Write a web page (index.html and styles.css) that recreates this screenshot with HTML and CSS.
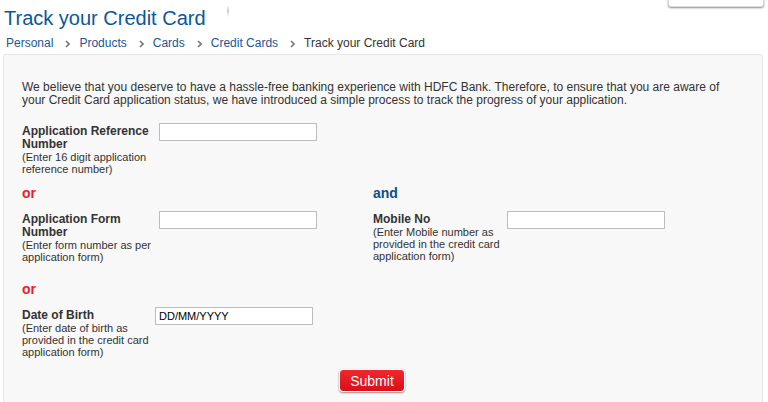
FILE: index.html
```html
<!DOCTYPE html>
<html lang="en">
<head>
<meta charset="UTF-8">
<title>Track your Credit Card</title>
<link rel="stylesheet" href="styles.css">
</head>
<body>
<div class="tools"></div>

<div class="header">
    <h1 class="title">Track your Credit Card</h1>
    <span class="divider"></span>
</div>

<div class="crumbs">
    <a class="crumb">Personal</a>
    <span class="sep"><svg width="5" height="8" viewBox="0 0 5 8"><path d="M1 1l3 3-3 3" fill="none" stroke="#777" stroke-width="1.6"/></svg></span>
    <a class="crumb">Products</a>
    <span class="sep"><svg width="5" height="8" viewBox="0 0 5 8"><path d="M1 1l3 3-3 3" fill="none" stroke="#777" stroke-width="1.6"/></svg></span>
    <a class="crumb">Cards</a>
    <span class="sep"><svg width="5" height="8" viewBox="0 0 5 8"><path d="M1 1l3 3-3 3" fill="none" stroke="#777" stroke-width="1.6"/></svg></span>
    <a class="crumb">Credit Cards</a>
    <span class="sep"><svg width="5" height="8" viewBox="0 0 5 8"><path d="M1 1l3 3-3 3" fill="none" stroke="#777" stroke-width="1.6"/></svg></span>
    <span class="current">Track your Credit Card</span>
</div>

<div class="panel">
    <p class="intro">We believe that you deserve to have a hassle-free banking experience with HDFC Bank. Therefore, to ensure that you are aware of your Credit Card application status, we have introduced a simple process to track the progress of your application.</p>

    <div class="field">
        <label class="label">
            <b>Application Reference Number</b>
            <span class="hint">(Enter 16 digit application reference number)</span>
        </label>
        <input class="text" type="text">
    </div>

    <div class="pair">
        <div class="col">
            <div class="or">or</div>
            <div class="field">
                <label class="label">
                    <b>Application Form Number</b>
                    <span class="hint">(Enter form number as per application form)</span>
                </label>
                <input class="text" type="text">
            </div>
        </div>
        <div class="col">
            <div class="and">and</div>
            <div class="field mobile">
                <label class="label">
                    <b>Mobile No</b>
                    <span class="hint">(Enter Mobile number as provided in the credit card application form)</span>
                </label>
                <input class="text" type="text">
            </div>
        </div>
    </div>

    <div class="or or2">or</div>
    <div class="field dob">
        <label class="label">
            <b>Date of Birth</b>
            <span class="hint">(Enter date of birth as provided in the credit card application form)</span>
        </label>
        <input class="text" type="text" value="DD/MM/YYYY">
    </div>

    <div class="actions">
        <button class="submit" type="button">Submit</button>
    </div>
</div>
</body>
</html>
```

FILE: styles.css
```css
body {
    margin: 0;
    font-family: "Liberation Sans", Arial, sans-serif;
    color: #333;
    background: #fff;
}

.tools {
    position: absolute;
    top: -20px;
    left: 668px;
    width: 94px;
    height: 25px;
    background: #fff;
    border: 1px solid #ddd;
    border-radius: 3px;
    box-shadow: 0 1px 2px rgba(0, 0, 0, 0.45);
}

.header {
    display: flex;
    align-items: flex-start;
    padding: 6px 0 0 4px;
}
.title {
    margin: 0;
    font-size: 20px;
    line-height: 24px;
    font-weight: normal;
    color: #0b5797;
}
.divider {
    width: 2px;
    height: 12px;
    margin: -1px 0 0 21px;
    background: linear-gradient(#fff, #ccc, #fff);
}

.crumbs {
    display: flex;
    align-items: center;
    margin: 5px 0 0 6px;
    height: 16px;
    font-size: 12px;
}
.crumb {
    color: #1c5594;
}
.sep {
    display: flex;
    margin: 1px 9px 0 12px;
}
.current {
    color: #333;
}

.panel {
    margin: 3px 5px 0 3px;
    padding: 26px 18px 40px 18px;
    background: #f8f8f8;
    border: 1px solid #e6e6e6;
    border-radius: 3px;
}

.intro {
    margin: 0 0 16px 0;
    font-size: 12px;
    line-height: 13px;
}

.field {
    display: flex;
    align-items: flex-start;
}
.label {
    width: 133px;
    margin-right: 4px;
    padding-top: 2px;
    font-size: 12px;
    line-height: 13px;
}
.label b {
    display: block;
}
.hint {
    display: block;
    font-size: 11px;
    line-height: 12px;
}
.text {
    box-sizing: border-box;
    width: 158px;
    height: 18px;
    margin: 0;
    padding: 0 3px;
    border: 1px solid #bdbdbd;
    background: #fff;
    font-family: "Liberation Sans", Arial, sans-serif;
    font-size: 11px;
    color: #000;
}

.pair {
    display: grid;
    grid-template-columns: 351px 1fr;
}
.mobile .label {
    width: 130px;
}

.or, .and {
    margin: 10px 0;
    font-size: 14px;
    line-height: 16px;
    font-weight: bold;
}
.or {
    color: #ee1c25;
}
.and {
    color: #0d4f8f;
}
.or2 {
    margin-top: 18px;
}

.dob .label {
    width: 129px;
}

.actions {
    display: flex;
    padding: 11px 0 0 317px;
}
.submit {
    width: 66px;
    height: 23px;
    padding: 0;
    border: 1px solid #fff;
    border-radius: 4px;
    background: linear-gradient(#f3262d, #d8101a);
    box-shadow: 0 1px 2px rgba(0, 0, 0, 0.45);
    font-family: "Liberation Sans", Arial, sans-serif;
    font-size: 14px;
    color: #fff;
    cursor: pointer;
}
```
